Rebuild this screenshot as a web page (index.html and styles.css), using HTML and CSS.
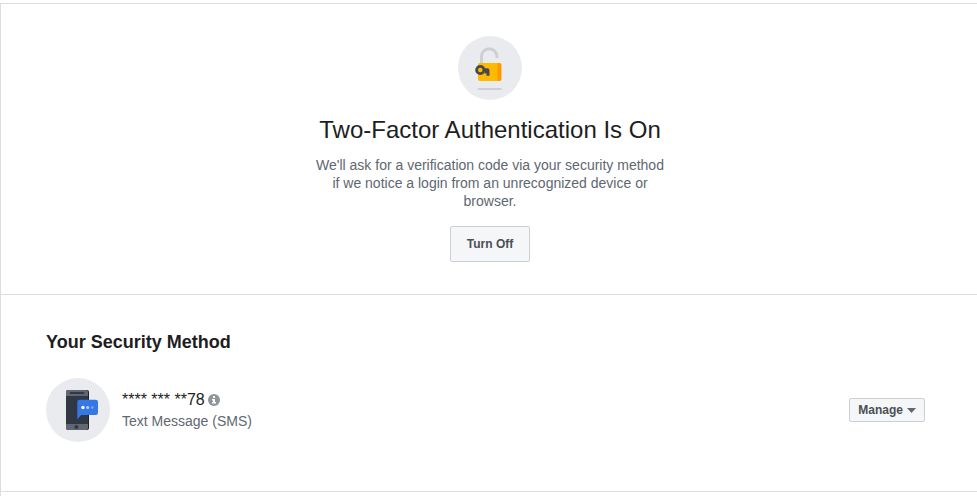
FILE: index.html
```html
<!DOCTYPE html>
<html lang="en">
<head>
<meta charset="utf-8">
<title>Two-Factor Authentication</title>
<link rel="stylesheet" href="styles.css">
</head>
<body>
<main class="card">
  <section class="status">
    <svg class="badge" viewBox="0 0 64 64" aria-hidden="true">
      <circle cx="32" cy="32" r="32" fill="#e9ebee"/>
      <path d="M23.500 28v-7.500a7.700 7.700 0 0 1 15.400 0V22" fill="none" stroke="#ccd0d5" stroke-width="3"/>
      <rect x="20" y="27" width="23.300" height="18" rx="2" fill="#ffba00"/>
      <path d="M39.500 27h1.800a2 2 0 0 1 2 2v14a2 2 0 0 1-2 2h-1.800z" fill="#ff9800"/>
      <circle cx="22.300" cy="34" r="3.700" fill="none" stroke="#444950" stroke-width="2.800"/>
      <path d="M26 32.200h3.200a2.300 2.300 0 0 1 2.300 2.300v5.300h-3v-2.300h-1.700v-1.700H26z" fill="#444950"/>
      <path d="M20.500 53h22.300" stroke="#ccd0d5" stroke-width="2" stroke-linecap="round"/>
    </svg>
    <h1 class="title">Two-Factor Authentication Is On</h1>
    <p class="description">We'll ask for a verification code via your security method if we notice a login from an unrecognized device or browser.</p>
    <button class="button button-large" type="button">Turn Off</button>
  </section>
  <section class="methods">
    <h2 class="heading">Your Security Method</h2>
    <div class="method">
      <svg class="badge" viewBox="0 0 64 64" aria-hidden="true">
        <circle cx="32" cy="32" r="32" fill="#e9ebee"/>
        <rect x="22" y="12" width="21" height="40" rx="2" fill="#1d2129"/>
        <rect x="20" y="12" width="22" height="40" rx="2" fill="#303846"/>
        <path d="M20 18v-4a2 2 0 0 1 2-2h18a2 2 0 0 1 2 2v4zM20 46h22v4a2 2 0 0 1-2 2H22a2 2 0 0 1-2-2z" fill="#606770"/>
        <path d="M24.500 15h10M36 15h1.500" stroke="#303846" stroke-width="2" stroke-linecap="round"/>
        <circle cx="30.300" cy="49" r="2" fill="#303846"/>
        <path d="M31.300 41.300V24a2.300 2.300 0 0 1 2.300-2.300h16.100A2.300 2.300 0 0 1 52 24v10.800a2.300 2.300 0 0 1-2.300 2.300H35.200z" fill="#3578e5"/>
        <circle cx="37" cy="29.500" r="1.700" fill="#fff"/>
        <circle cx="41.700" cy="29.500" r="1.500" fill="#b9d1f7"/>
        <circle cx="46.300" cy="29.500" r="1.400" fill="#769fed"/>
      </svg>
      <div class="details">
        <div class="phone">
          <span>**** *** **78</span>
          <svg class="info" viewBox="0 0 12 12" aria-hidden="true">
            <circle cx="6" cy="6" r="6" fill="#90949c"/>
            <path d="M5 2h2v2H5zM4 5h3v3h1v1.500H4V8h1V6.500H4z" fill="#fff"/>
          </svg>
        </div>
        <div class="kind">Text Message (SMS)</div>
      </div>
      <button class="button button-menu" type="button">Manage
        <svg class="caret" viewBox="0 0 9 5" aria-hidden="true"><path d="M0 0h9L4.500 5z" fill="#606770"/></svg>
      </button>
    </div>
  </section>
</main>
</body>
</html>
```
FILE: styles.css
```css
body {
  margin: 0;
  background: #fff;
  color: #1c1e21;
  font-family: "Liberation Sans", Arial, sans-serif;
  font-size: 14px;
  line-height: 18px;
}

.card {
  box-sizing: border-box;
  min-height: calc(100vh - 3px);
  margin-top: 3px;
  border-top: 1px solid #dadde1;
  border-left: 1px solid #dadde1;
}

.status {
  display: flex;
  flex-direction: column;
  align-items: center;
  padding: 32px 0 32px 2px;
  border-bottom: 1px solid #dadde1;
}

.badge {
  display: block;
  flex: none;
  width: 64px;
  height: 64px;
}

.title {
  margin: 16px 0 12px;
  font-size: 24px;
  font-weight: 400;
  line-height: 28px;
}

.description {
  max-width: 352px;
  margin: 0 0 16px;
  color: #606770;
  text-align: center;
}

.button {
  box-sizing: border-box;
  display: flex;
  align-items: center;
  justify-content: center;
  border: 1px solid #ccd0d5;
  border-radius: 2px;
  background: #f5f6f7;
  color: #4b4f56;
  font: bold 12px/16px "Liberation Sans", Arial, sans-serif;
  cursor: pointer;
}

.button-large {
  height: 36px;
  padding: 0 16px;
}

.button-menu {
  gap: 4px;
  height: 24px;
  margin-left: auto;
  padding: 0 8px;
}

.caret {
  width: 9px;
  height: 5px;
}

.methods {
  padding: 36px 52px 49px 45px;
  border-bottom: 1px solid #dadde1;
}

.heading {
  margin: 0 0 25px;
  font-size: 18px;
  line-height: 22px;
}

.method {
  display: flex;
  align-items: center;
}

.details {
  margin-left: 12px;
}

.phone {
  display: flex;
  align-items: center;
  gap: 3px;
  font-size: 16px;
  line-height: 20px;
}

.info {
  width: 12px;
  height: 12px;
}

.kind {
  margin-top: 2px;
  color: #606770;
}
```
